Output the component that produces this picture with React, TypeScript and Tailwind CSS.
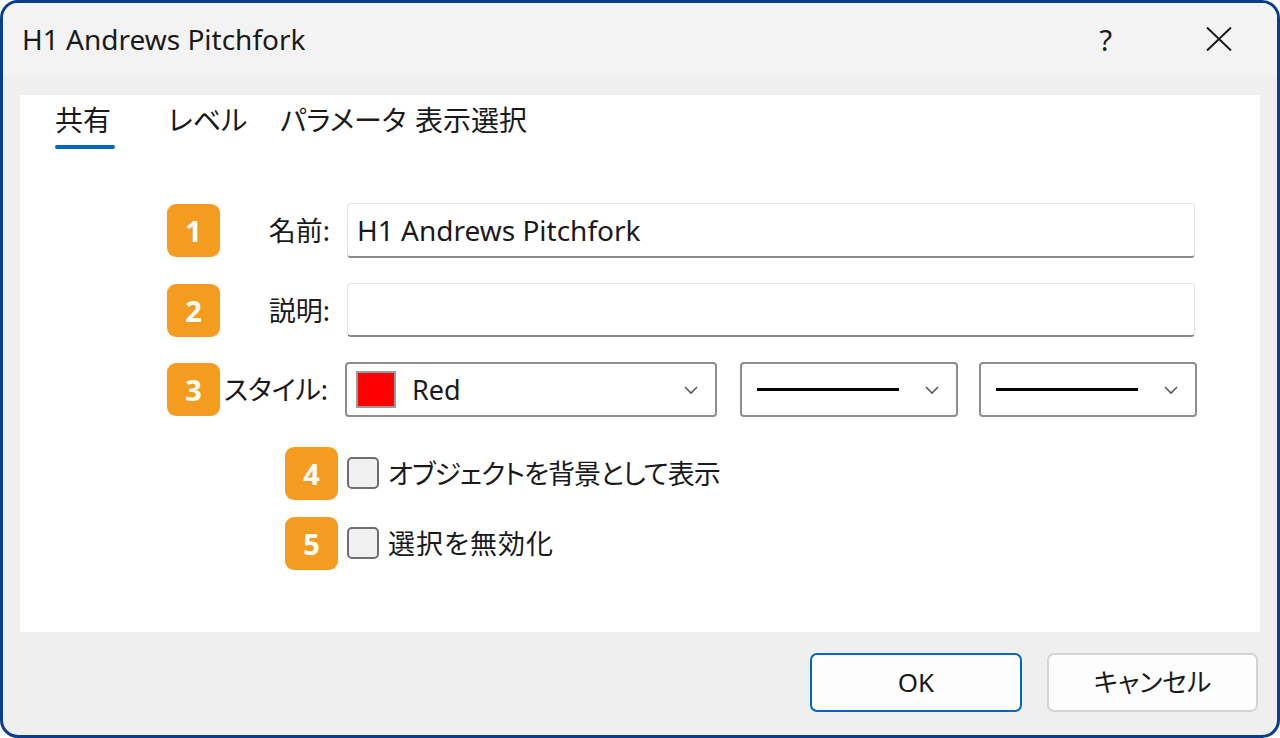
import React from "react";

const FONT = "[font-family:'Noto_Sans','Noto_Sans_CJK_JP',sans-serif] [font-feature-settings:'palt']";

function Badge({ n }: { n: number }) {
  return (
    <div className="w-[53px] h-[53px] shrink-0 rounded-[9px] bg-[#f39c1f] flex items-center justify-center text-white text-[29px] font-bold leading-none [font-family:'Open_Sans','Noto_Sans',sans-serif]">
      {n}
    </div>
  );
}

function Chevron() {
  return (
    <svg width="16" height="10" viewBox="0 0 16 10" className="shrink-0">
      <path d="M2 2 L8 8 L14 2" fill="none" stroke="#5a5a5a" strokeWidth="1.6" />
    </svg>
  );
}

function LineSelect() {
  return (
    <div className="w-[218px] h-[55px] border-2 border-[#8e8e8e] rounded-[4px] bg-white flex items-center pl-[15px] pr-[16px]">
      <div className="w-[142px] h-[3px] bg-black" />
      <div className="flex-1" />
      <Chevron />
    </div>
  );
}

function Checkbox() {
  return (
    <div className="w-[32px] h-[32px] shrink-0 rounded-[5px] border-2 border-[#6e6e6e] bg-[#f0f0f0]" />
  );
}

export default function App() {
  return (
    <div className={`w-[1280px] h-[738px] bg-white ${FONT}`}>
      <div className="w-[1280px] h-[738px] border-[3px] border-[#0b3d8a] rounded-[18px] overflow-hidden bg-[#efefef] flex flex-col">
        {/* Title bar */}
        <div className="h-[72px] shrink-0 bg-[#f3f3f3] flex items-center pl-[19px] text-[#1a1a1a]">
          <div className="text-[28px] leading-none [font-family:'Noto_Sans',sans-serif]">H1 Andrews Pitchfork</div>
          <div className="flex-1" />
          <div className="text-[29px] leading-none mr-[93px] [font-family:'Noto_Sans',sans-serif]">?</div>
          <svg width="28" height="24" viewBox="0 0 28 24" className="mr-[44px]">
            <path d="M2 0.5 L26 23.5 M26 0.5 L2 23.5" stroke="#1a1a1a" strokeWidth="2" fill="none" />
          </svg>
        </div>

        {/* Body */}
        <div className="flex-1 flex flex-col pt-[20px] px-[17px]">
          <div className="h-[537px] bg-white flex flex-col">
            {/* Tabs */}
            <div className="flex pt-[7px] pl-[35px] text-[28px] leading-[36px] text-[#1a1a1a]">
              <div className="w-[113px] flex flex-col">
                <span>共有</span>
                <div className="mt-[7px] w-[60px] h-[4px] rounded-full bg-[#0067c0]" />
              </div>
              <div className="w-[112px]">レベル</div>
              <div className="w-[135px]">パラメータ</div>
              <div>表示選択</div>
            </div>

            {/* Form */}
            <div className="flex flex-col pl-[147px] mt-[54px] text-[#1a1a1a]">
              {/* Row 1 */}
              <div className="flex items-center h-[55px]">
                <Badge n={1} />
                <div className="w-[110px] text-right text-[27px] leading-none">名前:</div>
                <div className="ml-[17px] w-[848px] h-[55px] bg-white border border-[#e3e3e3] border-b-2 border-b-[#8a8a8a] rounded-[4px] flex items-center pl-[9px] text-[28px] [font-family:'Noto_Sans',sans-serif]">
                  H1 Andrews Pitchfork
                </div>
              </div>
              {/* Row 2 */}
              <div className="flex items-center h-[54px] mt-[25px]">
                <Badge n={2} />
                <div className="w-[110px] text-right text-[27px] leading-none">説明:</div>
                <div className="ml-[17px] w-[848px] h-[54px] bg-white border border-[#e3e3e3] border-b-2 border-b-[#8a8a8a] rounded-[4px]" />
              </div>
              {/* Row 3 */}
              <div className="flex items-center h-[55px] mt-[25px]">
                <Badge n={3} />
                <div className="w-[108px] text-right text-[27px] leading-none">スタイル:</div>
                <div className="ml-[17px] w-[372px] h-[55px] bg-white border-2 border-[#8e8e8e] rounded-[4px] flex items-center pl-[9px] pr-[16px]">
                  <div className="w-[40px] h-[37px] border-2 border-[#9a9a9a] bg-[#ff0000]" />
                  <span className="ml-[16px] text-[27px] leading-none [font-family:'Noto_Sans',sans-serif]">Red</span>
                  <div className="flex-1" />
                  <Chevron />
                </div>
                <div className="ml-[23px]">
                  <LineSelect />
                </div>
                <div className="ml-[21px]">
                  <LineSelect />
                </div>
              </div>
              {/* Row 4 */}
              <div className="flex items-center h-[52px] mt-[30px] pl-[118px]">
                <Badge n={4} />
                <div className="ml-[9px]">
                  <Checkbox />
                </div>
                <span className="ml-[9px] text-[27px] leading-none tracking-[-1px]">オブジェクトを背景として表示</span>
              </div>
              {/* Row 5 */}
              <div className="flex items-center h-[52px] mt-[18px] pl-[118px]">
                <Badge n={5} />
                <div className="ml-[9px]">
                  <Checkbox />
                </div>
                <span className="ml-[9px] text-[27px] leading-none tracking-[1px]">選択を無効化</span>
              </div>
            </div>
          </div>

          {/* Buttons */}
          <div className="flex justify-end mt-[21px] pr-[2px] gap-[25px]">
            <div className="w-[212px] h-[59px] rounded-[7px] border-2 border-[#0067c0] bg-[#fdfdfd] flex items-center justify-center text-[26px] text-[#1a1a1a] [font-family:'Noto_Sans',sans-serif]">
              OK
            </div>
            <div className="w-[211px] h-[59px] rounded-[7px] border-2 border-[#d4d4d4] bg-[#fdfdfd] flex items-center justify-center text-[26px] text-[#1a1a1a]">
              キャンセル
            </div>
          </div>
        </div>
      </div>
    </div>
  );
}
